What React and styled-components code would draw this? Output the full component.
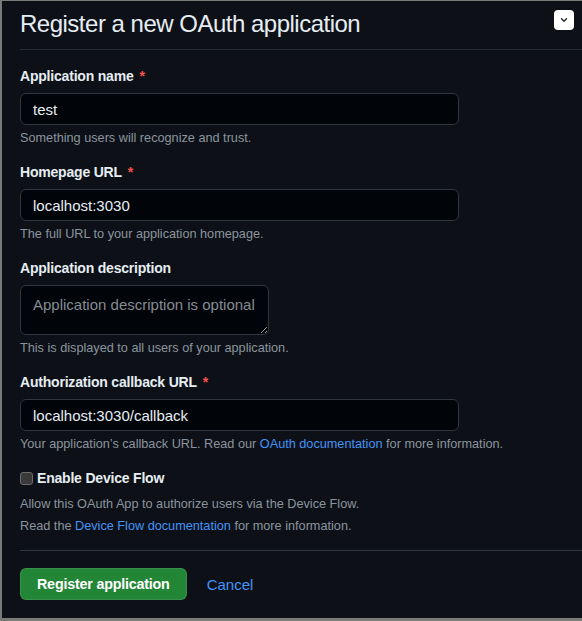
import React from "react";
import styled, { createGlobalStyle } from "styled-components";

const GlobalStyle = createGlobalStyle`
  html, body {
    margin: 0;
    padding: 0;
    background: #0d1117;
  }
  * { box-sizing: border-box; }
`;

const FONT = `"Liberation Sans", Arial, Helvetica, sans-serif`;

const Frame = styled.div`
  width: 582px;
  height: 621px;
  background: #0d1117;
  border-left: 2px solid #7a7a7a;
  border-top: 1px solid #7a7a7a;
  border-bottom: 3px solid #7a7a7a;
  padding-left: 18px;
  display: flex;
  flex-direction: column;
  font-family: ${FONT};
  color: #e6edf3;
  overflow: hidden;
`;

const Header = styled.div`
  display: flex;
  justify-content: space-between;
  align-items: flex-start;
  padding: 8px 8px 10px 0;
  border-bottom: 1px solid #262c34;
`;

const Title = styled.h2`
  margin: 0;
  font-size: 24px;
  font-weight: 400;
  line-height: 30px;
  letter-spacing: -0.5px;
  color: #e6edf3;
`;

const CollapseButton = styled.button`
  width: 20px;
  height: 20px;
  margin-top: 1px;
  padding: 0;
  border: none;
  border-radius: 4px;
  background: #ffffff;
  display: flex;
  align-items: center;
  justify-content: center;
`;

const Form = styled.form`
  display: flex;
  flex-direction: column;
  padding-top: 16px;
`;

const Field = styled.div`
  display: flex;
  flex-direction: column;
  align-items: flex-start;
  margin-bottom: 15px;
`;

const Label = styled.label`
  font-size: 14px;
  font-weight: 700;
  line-height: 20px;
  letter-spacing: -0.2px;
  color: #e6edf3;
  margin-bottom: 7px;
`;

const Required = styled.span`
  color: #f85149;
  margin-left: 6px;
`;

const TextInput = styled.input`
  width: 439px;
  height: 32px;
  padding: 0 12px;
  background: #010409;
  border: 1px solid #30363d;
  border-radius: 6px;
  color: #e6edf3;
  font-family: ${FONT};
  font-size: 15px;
  line-height: 20px;
  outline: none;
`;

const TextArea = styled.textarea`
  width: 249px;
  height: 50px;
  padding: 9px 12px;
  background: #010409;
  border: 1px solid #30363d;
  border-radius: 6px;
  color: #e6edf3;
  font-family: ${FONT};
  font-size: 15px;
  line-height: 20px;
  outline: none;
  color-scheme: dark;
  &::placeholder {
    color: #858c94;
  }
`;

const Help = styled.p`
  margin: 4px 0 0;
  font-size: 12.7px;
  line-height: 18px;
  color: #8b949e;
`;

const Link = styled.a`
  color: #4493f8;
  text-decoration: none;
`;

const CheckRow = styled.label`
  display: flex;
  align-items: center;
  gap: 4px;
  height: 20px;
  font-size: 14px;
  font-weight: 700;
  letter-spacing: -0.2px;
  color: #e6edf3;
`;

const Checkbox = styled.input.attrs({ type: "checkbox" })`
  appearance: none;
  width: 13px;
  height: 13px;
  margin: 0;
  border: 1px solid #6b6b6b;
  border-radius: 3px;
  background: #3a3a3a;
`;

const Notes = styled.div`
  margin-top: 5px;
  display: flex;
  flex-direction: column;
`;

const Note = styled.p`
  margin: 0;
  font-size: 12.7px;
  line-height: 22px;
  color: #8b949e;
`;

const Footer = styled.div`
  margin-top: 13px;
  padding-top: 17px;
  border-top: 1px solid #30363d;
  display: flex;
  align-items: center;
  gap: 20px;
`;

const PrimaryButton = styled.button`
  height: 32px;
  padding: 0 16px;
  background: #238636;
  border: 1px solid rgba(240, 246, 252, 0.1);
  border-radius: 6px;
  color: #ffffff;
  font-family: ${FONT};
  font-size: 14.3px;
  font-weight: 700;
  letter-spacing: -0.2px;
`;

const CancelLink = styled.a`
  color: #4493f8;
  font-size: 15px;
  text-decoration: none;
`;

function Chevron() {
  return (
    <svg width="8" height="6" viewBox="0 0 8 6" fill="none">
      <path d="M1.5 1.8 L4 4.2 L6.5 1.8" stroke="#24292f" strokeWidth="1.4" strokeLinecap="round" strokeLinejoin="round" />
    </svg>
  );
}

export default function App() {
  return (
    <>
      <GlobalStyle />
      <Frame>
        <Header>
          <Title>Register a new OAuth application</Title>
          <CollapseButton aria-label="Collapse">
            <Chevron />
          </CollapseButton>
        </Header>
        <Form onSubmit={(e) => e.preventDefault()}>
          <Field>
            <Label>
              Application name<Required>*</Required>
            </Label>
            <TextInput defaultValue="test" />
            <Help>Something users will recognize and trust.</Help>
          </Field>
          <Field>
            <Label>
              Homepage URL<Required>*</Required>
            </Label>
            <TextInput defaultValue="localhost:3030" />
            <Help>The full URL to your application homepage.</Help>
          </Field>
          <Field>
            <Label>Application description</Label>
            <TextArea placeholder="Application description is optional" />
            <Help>This is displayed to all users of your application.</Help>
          </Field>
          <Field>
            <Label>
              Authorization callback URL<Required>*</Required>
            </Label>
            <TextInput defaultValue="localhost:3030/callback" />
            <Help>
              Your application’s callback URL. Read our <Link href="#">OAuth documentation</Link> for more information.
            </Help>
          </Field>
          <CheckRow>
            <Checkbox />
            Enable Device Flow
          </CheckRow>
          <Notes>
            <Note>Allow this OAuth App to authorize users via the Device Flow.</Note>
            <Note>
              Read the <Link href="#">Device Flow documentation</Link> for more information.
            </Note>
          </Notes>
          <Footer>
            <PrimaryButton type="submit">Register application</PrimaryButton>
            <CancelLink href="#">Cancel</CancelLink>
          </Footer>
        </Form>
      </Frame>
    </>
  );
}
